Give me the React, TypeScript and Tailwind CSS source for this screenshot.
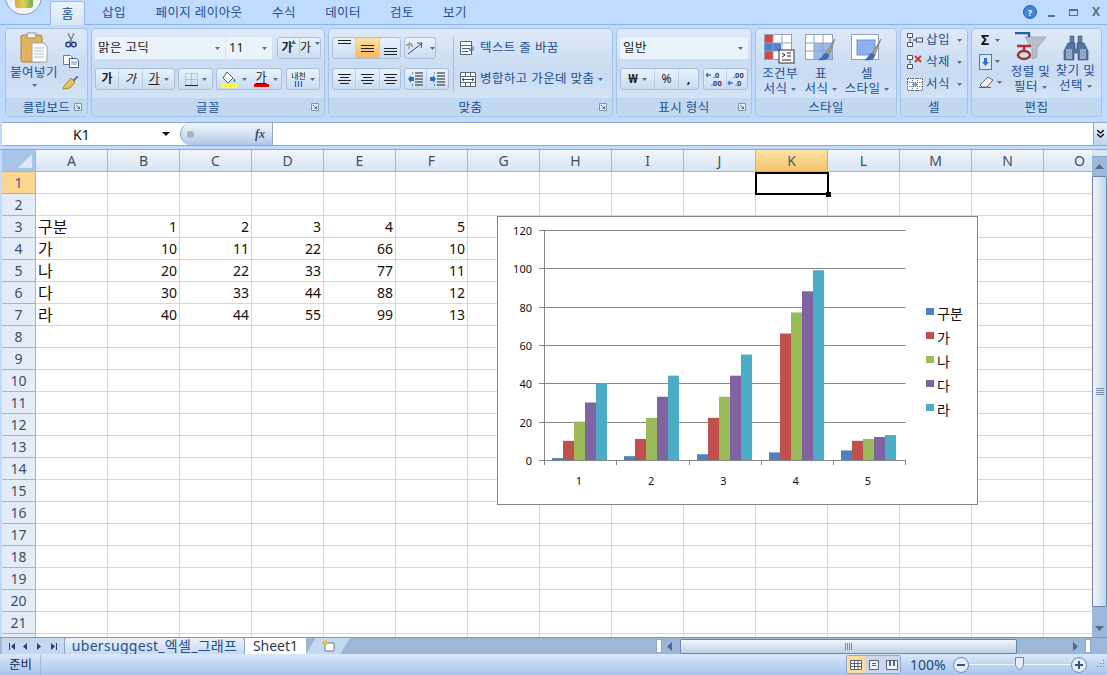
import type { ReactNode } from "react";

const KO = "font-['Noto_Sans','Noto_Sans_CJK_KR',sans-serif]";

const ribbonText = "text-[12.5px] leading-[16px] text-[#24508f] tracking-[0.4px]";

const Caret = ({ className = "" }: { className?: string }) => (
  <svg width="5" height="3" viewBox="0 0 5 3" className={`shrink-0 ${className}`}>
    <path d="M0 0h5L2.500 3z" fill="#56708f" />
  </svg>
);

const Launcher = () => (
  <svg width="8" height="8" viewBox="0 0 8 8" className="shrink-0">
    <path d="M.5.5h7v7h-7z" fill="#e4eefb" stroke="#7a94b5" />
    <path d="M2 2l3.500 3.500M3.500 5.500h2v-2" fill="none" stroke="#4d6d94" />
  </svg>
);

const Group = ({
  label,
  width,
  launcher,
  children,
}: {
  label: string;
  width: string;
  launcher?: boolean;
  children: ReactNode;
}) => (
  <div
    className={`${width} flex h-[89px] shrink-0 flex-col overflow-hidden rounded-[4px] border border-[#a9c3e2] bg-gradient-to-b from-[#dde9f8] via-[#c8dbf2] to-[#dceaf9]`}
  >
    <div className="h-[69px] shrink-0">{children}</div>
    <div className="relative flex h-[18px] items-center justify-center bg-[#c2d8f0] pt-[1px]">
      <span className={ribbonText}>{label}</span>
      {launcher && (
        <span className="absolute right-[5px] top-[5px] flex">
          <Launcher />
        </span>
      )}
    </div>
  </div>
);

const BtnGroup = ({ className = "", children }: { className?: string; children: ReactNode }) => (
  <div
    className={`flex h-[22px] items-stretch overflow-hidden rounded-[3px] border border-[#a9bfdb] bg-gradient-to-b from-[#e9f2fc] to-[#c9dcf2] ${className}`}
  >
    {children}
  </div>
);

const Btn = ({
  className = "",
  active,
  last,
  children,
}: {
  className?: string;
  active?: boolean;
  last?: boolean;
  children: ReactNode;
}) => (
  <div
    className={`flex items-center justify-center gap-[4px] ${last ? "" : "border-r border-[#bccfe6]"} ${
      active ? "bg-gradient-to-b from-[#fde3a4] to-[#fbb755]" : ""
    } ${className}`}
  >
    {children}
  </div>
);

const Combo = ({ value, className = "" }: { value: string; className?: string }) => (
  <div className={`flex h-[22px] items-center justify-between bg-[#eaf2fb] pl-[3px] pr-[5px] ${className}`}>
    <span className="text-[12.5px] tracking-[0.4px] text-[#222]">{value}</span>
    <Caret />
  </div>
);

const Lines = ({ rows }: { rows: number[] }) => (
  <span className="flex flex-col items-center gap-[2px]">
    {rows.map((w, i) => (
      <span key={i} className="h-px bg-[#222]" style={{ width: w }} />
    ))}
  </span>
);

const Letter = ({ className = "" }: { className?: string }) => (
  <span className={`text-[12px] leading-none text-[#222] ${className}`}>가</span>
);

const PasteIcon = () => (
  <svg width="28" height="32" viewBox="0 0 28 32">
    <rect x="1" y="3" width="21" height="27" rx="2" fill="#e2b25f" stroke="#b08236" />
    <rect x="7" y="1" width="9" height="5" rx="1" fill="#f3f0e4" stroke="#8d8d80" />
    <path d="M12 11h12l3 3v16H12z" fill="#fff" stroke="#99a3b3" />
    <path d="M14 16h10M14 19h10M14 22h10M14 25h10" stroke="#b3bcc9" />
  </svg>
);

const ScissorsIcon = () => (
  <svg width="12" height="15" viewBox="0 0 12 15">
    <path d="M3 0l4 9M9 0L5 9" stroke="#7d8794" strokeWidth="1.500" />
    <circle cx="3.200" cy="11.500" r="2.300" fill="none" stroke="#25427a" strokeWidth="1.500" />
    <circle cx="8.800" cy="11.500" r="2.300" fill="none" stroke="#25427a" strokeWidth="1.500" />
  </svg>
);

const CopyIcon = () => (
  <svg width="16" height="13" viewBox="0 0 16 13">
    <path d="M.5.500h7l2 2v7h-9z" fill="#fff" stroke="#5b7fae" />
    <path d="M6.500 3.500h7l2 2v7h-9z" fill="#fff" stroke="#355f96" />
    <path d="M8 7h6M8 9h6" stroke="#6f8db3" />
  </svg>
);

const BrushIcon = () => (
  <svg width="17" height="15" viewBox="0 0 17 15">
    <path d="M9 3l4 4-5 6-7 1 1-3z" fill="#e8c45c" stroke="#a98a33" />
    <path d="M11 5l4-4 1 1-4 4z" fill="#5b6fa8" stroke="#3d4f82" strokeWidth=".5" />
  </svg>
);

const BorderIcon = () => (
  <svg width="13" height="13" viewBox="0 0 13 13">
    <path d="M.5.500h12v12H.500zM6.500.500v12M.5 6.500h12" fill="none" stroke="#8f9cae" strokeDasharray="1 1" />
    <path d="M0 12.500h13" stroke="#222" />
  </svg>
);

const BucketIcon = () => (
  <svg width="17" height="17" viewBox="0 0 17 17">
    <path d="M6 1l6 6-5 5-5-5z" fill="#fff" stroke="#4d5a70" />
    <path d="M13 7c1 2 2 3 1 4s-2-1-1-4z" fill="#3d74b8" />
    <rect x="0" y="13" width="16" height="4" fill="#ffff33" />
  </svg>
);

const OrientIcon = () => (
  <svg width="24" height="16" viewBox="0 0 24 16">
    <path d="M3 14L16 4" stroke="#3c4a5c" />
    <path d="M12 3h5l-1 5" fill="none" stroke="#3c4a5c" />
    <text x="3" y="8" fontSize="7" fill="#222" transform="rotate(-38 6 8)">가</text>
  </svg>
);

const IndentIcon = ({ flip }: { flip?: boolean }) => (
  <svg width="16" height="15" viewBox="0 0 16 15">
    <path d="M7 1h8M7 4h8M7 7h8M7 10h8M7 13h8M4 1h1M4 13h1" stroke="#222" />
    <path d={flip ? "M0 5h3V3l3 4-3 4V9H0z" : "M6 5H3V3L0 7l3 4V9h3z"} fill="#2f6fc0" />
  </svg>
);

const WrapIcon = () => (
  <svg width="16" height="14" viewBox="0 0 16 14">
    <path d="M.5.500h11v13H.500z" fill="#f6f9fd" stroke="#5a6472" />
    <path d="M0 4.500h11M2 7.500h8M2 10.500h6" stroke="#5a6472" />
    <path d="M13 5v4h-3M11 7.500L9.500 9l1.500 1.500" fill="none" stroke="#3f6fa8" />
  </svg>
);

const MergeIcon = () => (
  <svg width="16" height="15" viewBox="0 0 16 15">
    <path d="M.5.500h15v14H.500z" fill="#fff" stroke="#56657a" />
    <path d="M0 4.500h16M0 10.500h16M5.500 0v4M10.500 0v4M5.500 11v4M10.500 11v4" stroke="#56657a" />
    <path d="M2 7.500h12M2 7.500l2-1.500M2 7.500l2 1.500M14 7.500l-2-1.500M14 7.500l-2 1.500" fill="none" stroke="#222" strokeWidth=".8" />
  </svg>
);

const DecimalIcon = ({ more }: { more?: boolean }) => (
  <svg width="20" height="16" viewBox="0 0 20 16">
    <text x={more ? 6 : 8} y="7" fontSize="7.500" fontWeight="700" fill="#33405a">{more ? ".00" : ".0"}</text>
    <text x={more ? 8 : 6} y="15" fontSize="7.500" fontWeight="700" fill="#33405a">{more ? ".0" : ".00"}</text>
    <path d={more ? "M1 12h5M1 12l2-2M1 12l2 2" : "M1 4h5M1 4l2-2M1 4l2 2"} stroke="#3b78c2" fill="none" strokeWidth="1.300" />
  </svg>
);

const TableGrid = ({ tint }: { tint: "cond" | "table" | "cell" }) => (
  <svg width="32" height="30" viewBox="0 0 32 30">
    <rect x=".5" y=".5" width="27" height="25" fill="#fff" stroke="#8ea3bf" />
    {tint === "cond" && (
      <>
        <rect x="1" y="1" width="8" height="8" fill="#d9453c" />
        <rect x="1" y="9" width="16" height="8" fill="#4f81d1" />
        <rect x="1" y="17" width="8" height="8" fill="#d9453c" />
      </>
    )}
    {tint === "table" && <rect x="9" y="9" width="18" height="16" fill="#9bb8ea" />}
    {tint === "cell" && <rect x="6" y="6" width="18" height="15" fill="#8fb0ee" stroke="#6e8fd0" />}
    {tint !== "cell" && (
      <path d="M9 0v26M18 0v26M0 9h28M0 17h28" stroke="#8ea3bf" />
    )}
    {tint === "cond" ? (
      <g>
        <rect x="15" y="16" width="15" height="13" fill="#fff" stroke="#333" />
        <path d="M18 19l3 2-3 2M27 19h-4M27 22h-4M18 26h9" fill="none" stroke="#222" />
      </g>
    ) : (
      <g>
        <path d="M30 5L21 19l3 2z" fill="#a9a27c" stroke="#6d6a55" strokeWidth=".5" />
        <path d="M21 19c-3 0-3 4-8 7 5 1 11 0 11-5z" fill="#3f6fb0" />
      </g>
    )}
  </svg>
);

const CellIcon = ({ kind }: { kind: "add" | "del" | "fmt" }) =>
  kind === "fmt" ? (
    <svg width="16" height="16" viewBox="0 0 16 16">
      <path d="M.5 2.500h15v12H.500z" fill="#fff" stroke="#4b5563" strokeDasharray="1.500 1" />
      <path d="M5.500 2v13M10.500 2v13M0 6.500h16M0 10.500h16" stroke="#6b7a90" strokeDasharray="1 1" />
      <rect x="6" y="7" width="4" height="3" fill="#7aa0d8" />
    </svg>
  ) : (
    <svg width="16" height="16" viewBox="0 0 16 16">
      <path d="M.5 1.500h5v4h-5zM.5 10.500h5v4h-5zM3 6.500v3" fill="#fff" stroke="#4b5563" />
      {kind === "add" ? (
        <>
          <path d="M6 8h3" stroke="#222" />
          <rect x="9.500" y="6" width="6" height="4" fill="#eaf2fb" stroke="#4b5563" />
        </>
      ) : (
        <path d="M8 2l6 6M14 2L8 8" stroke="#d8382b" strokeWidth="2" />
      )}
    </svg>
  );

const SortIcon = () => (
  <svg width="31" height="30" viewBox="0 0 31 30">
    <path d="M10 5h21l-9 11v9l-5 2V16z" fill="#b9c0c8" stroke="#7d8794" strokeWidth=".5" />
    <path d="M0 1h14v4" fill="none" stroke="#2c5a9f" strokeWidth="2.500" />
    <path d="M2 14h14" stroke="#a3372a" strokeWidth="2.500" />
    <ellipse cx="9" cy="23" rx="6" ry="4" fill="none" stroke="#a3372a" strokeWidth="2.500" />
    <path d="M9 14v5" stroke="#a3372a" strokeWidth="2.500" />
  </svg>
);

const BinocularsIcon = () => (
  <svg width="28" height="26" viewBox="0 0 28 26">
    <path d="M8 1h4v8H8zM16 1h4v8h-4z" fill="#5f7da6" stroke="#34496b" strokeWidth=".5" />
    <path d="M6 8h7v6h2V8h7l4 8v9H16v-7h-4v7H2v-9z" fill="#5474a0" stroke="#2f4668" strokeWidth=".6" />
    <path d="M4 14h6v10H4zM18 14h6v10h-6z" fill="#91a9c8" />
  </svg>
);

const StyleButton = ({
  tint,
  top,
  bottom,
  className,
}: {
  tint: "cond" | "table" | "cell";
  top: string;
  bottom: string;
  className: string;
}) => (
  <div className={`flex flex-col items-center pt-[5px] ${className}`}>
    <TableGrid tint={tint} />
    <span className={`${ribbonText} mt-[2px]`}>{top}</span>
    <span className={`${ribbonText} -mt-[1px] flex items-center gap-[4px] whitespace-nowrap`}>
      {bottom}
      <Caret />
    </span>
  </div>
);

const CellRow = ({ kind, label }: { kind: "add" | "del" | "fmt"; label: string }) => (
  <div className="flex h-[22px] items-center gap-[3px] pl-[6px]">
    <CellIcon kind={kind} />
    <span className={ribbonText}>{label}</span>
    <Caret className="ml-[4px]" />
  </div>
);

const Ribbon = () => (
  <div className="flex h-[94px] shrink-0 gap-[3px] bg-[#bfdbff] pl-[5px] pt-[3px]">
    <Group label="클립보드" width="w-[83px]" launcher>
      <div className="flex h-full">
        <div className="flex w-[56px] flex-col items-center pt-[3px]">
          <PasteIcon />
          <span className={`${ribbonText} mt-[1px]`}>붙여넣기</span>
          <Caret className="mt-[3px]" />
        </div>
        <div className="flex flex-col items-center gap-[7px] pt-[4px]">
          <ScissorsIcon />
          <CopyIcon />
          <BrushIcon />
        </div>
      </div>
    </Group>

    <Group label="글꼴" width="w-[234px]" launcher>
      <div className="flex flex-col gap-[9px] pl-[3px] pt-[8px]">
        <div className="flex items-center gap-px">
          <Combo value="맑은 고딕" className="w-[130px]" />
          <Combo value="11" className="w-[46px]" />
          <BtnGroup className="ml-[4px] w-[44px]">
            <Btn className="w-[23px] gap-0">
              <Letter className="font-bold" />
              <svg width="5" height="4" viewBox="0 0 5 4" className="-ml-[6px] -mt-[12px]"><path d="M0 4h5L2.500 0z" fill="#2f6fc0" /></svg>
            </Btn>
            <Btn className="w-[20px] gap-0" last>
              <Letter className="text-[10px]" />
              <svg width="5" height="3" viewBox="0 0 5 3" className="-mt-[10px]"><path d="M0 0h5L2.500 3z" fill="#2f6fc0" /></svg>
            </Btn>
          </BtnGroup>
        </div>
        <div className="flex gap-[3px]">
          <BtnGroup className="w-[80px]">
            <Btn className="w-[23px]"><Letter className="font-bold" /></Btn>
            <Btn className="w-[24px]"><Letter className="italic" /></Btn>
            <Btn className="flex-1" last><Letter className="underline" /><Caret /></Btn>
          </BtnGroup>
          <BtnGroup className="w-[35px]">
            <Btn className="flex-1" last><BorderIcon /><Caret /></Btn>
          </BtnGroup>
          <BtnGroup className="w-[66px]">
            <Btn className="w-[33px]" last><BucketIcon /><Caret /></Btn>
            <Btn className="flex-1" last>
              <span className="flex flex-col items-center">
                <Letter className="underline" />
                <span className="h-[3px] w-[15px] bg-[#e00000]" />
              </span>
              <Caret />
            </Btn>
          </BtnGroup>
          <BtnGroup className="ml-px w-[34px]">
            <Btn className="flex-1" last>
              <span className="flex flex-col items-center gap-px">
                <span className="text-[8px] leading-[9px] text-[#222]">내천</span>
                <svg width="9" height="6" viewBox="0 0 9 6"><path d="M1.500 0v6M4.500 0v6M7.500 0v6" stroke="#2f6fc0" strokeWidth="1.300" /></svg>
              </span>
              <Caret />
            </Btn>
          </BtnGroup>
        </div>
      </div>
    </Group>

    <Group label="맞춤" width="w-[285px]" launcher>
      <div className="flex h-full pl-[3px] pt-[8px]">
        <div className="flex w-[121px] flex-col gap-[9px]">
          <div className="flex gap-[3px]">
            <BtnGroup className="w-[69px]">
              <Btn className="w-[23px] items-start pt-[2px]"><Lines rows={[13, 13]} /></Btn>
              <Btn className="w-[24px]" active><Lines rows={[13, 13, 13]} /></Btn>
              <Btn className="flex-1 items-end pb-[3px]" last><Lines rows={[13, 13, 13]} /></Btn>
            </BtnGroup>
            <BtnGroup className="w-[32px]">
              <Btn className="flex-1 gap-0" last><OrientIcon /><Caret className="-ml-[3px]" /></Btn>
            </BtnGroup>
          </div>
          <div className="flex gap-[3px]">
            <BtnGroup className="w-[69px]">
              <Btn className="w-[23px]"><Lines rows={[13, 9, 13, 9]} /></Btn>
              <Btn className="w-[24px]"><Lines rows={[13, 9, 13, 9]} /></Btn>
              <Btn className="flex-1" last><Lines rows={[13, 9, 13, 9]} /></Btn>
            </BtnGroup>
            <BtnGroup className="w-[45px]">
              <Btn className="w-[22px]"><IndentIcon /></Btn>
              <Btn className="flex-1" last><IndentIcon flip /></Btn>
            </BtnGroup>
          </div>
        </div>
        <div className="h-[55px] w-px bg-[#a9bfdb]" />
        <div className="flex flex-col gap-[9px] pl-[6px]">
          <div className="flex h-[22px] items-center gap-[4px]">
            <WrapIcon />
            <span className={ribbonText}>텍스트 줄 바꿈</span>
          </div>
          <div className="flex h-[22px] items-center gap-[4px]">
            <MergeIcon />
            <span className={ribbonText}>병합하고 가운데 맞춤</span>
            <Caret />
          </div>
        </div>
      </div>
    </Group>

    <Group label="표시 형식" width="w-[136px]" launcher>
      <div className="flex flex-col gap-[9px] pl-[3px] pt-[8px]">
        <Combo value="일반" className="w-[128px]" />
        <div className="flex gap-[4px]">
          <BtnGroup className="w-[79px]">
            <Btn className="w-[34px]" >
              <span className="text-[13px] font-bold text-[#222]">₩</span>
              <Caret />
            </Btn>
            <Btn className="w-[24px]"><span className="text-[12px] text-[#222]">%</span></Btn>
            <Btn className="flex-1" last><span className="text-[13px] font-bold text-[#222]">,</span></Btn>
          </BtnGroup>
          <BtnGroup className="w-[45px]">
            <Btn className="w-[23px]"><DecimalIcon /></Btn>
            <Btn className="flex-1" last><DecimalIcon more /></Btn>
          </BtnGroup>
        </div>
      </div>
    </Group>

    <Group label="스타일" width="w-[142px]">
      <div className="flex">
        <StyleButton tint="cond" top="조건부" bottom="서식" className="w-[48px]" />
        <StyleButton tint="table" top="표" bottom="서식" className="w-[34px]" />
        <StyleButton tint="cell" top="셀" bottom="스타일" className="w-[58px]" />
      </div>
    </Group>

    <Group label="셀" width="w-[68px]">
      <div className="flex flex-col">
        <CellRow kind="add" label="삽입" />
        <CellRow kind="del" label="삭제" />
        <CellRow kind="fmt" label="서식" />
      </div>
    </Group>

    <Group label="편집" width="w-[131px]">
      <div className="flex">
        <div className="flex w-[36px] flex-col items-start gap-[5px] pl-[7px] pt-[3px]">
          <div className="flex h-[16px] items-center gap-[6px] pl-[2px]">
            <span className="text-[14px] font-bold leading-none text-[#111]">Σ</span>
            <Caret />
          </div>
          <div className="flex h-[17px] items-center gap-[3px]">
            <svg width="13" height="16" viewBox="0 0 13 16">
              <rect x=".5" y=".5" width="12" height="15" fill="#dbe8f8" stroke="#5478ad" />
              <path d="M5 4h3v4h2l-3.500 4L3 8h2z" fill="#2f6fc0" />
            </svg>
            <Caret />
          </div>
          <div className="flex h-[14px] items-center gap-[3px]">
            <svg width="15" height="12" viewBox="0 0 15 12">
              <path d="M9 1l5 3-6 7H3L1 9z" fill="#f4f6f8" stroke="#5c6673" />
              <path d="M0 11.500h12" stroke="#5c6673" />
            </svg>
            <Caret />
          </div>
        </div>
        <div className="flex w-[45px] flex-col items-center pt-[3px]">
          <SortIcon />
          <span className={`${ribbonText} mt-[2px] whitespace-nowrap`}>정렬 및</span>
          <span className={`${ribbonText} -mt-[1px] flex items-center gap-[4px]`}>필터<Caret /></span>
        </div>
        <div className="flex w-[45px] flex-col items-center pt-[6px]">
          <BinocularsIcon />
          <span className={`${ribbonText} mt-[2px] whitespace-nowrap`}>찾기 및</span>
          <span className={`${ribbonText} -mt-[1px] flex items-center gap-[4px]`}>선택<Caret /></span>
        </div>
      </div>
    </Group>
  </div>
);

const TabBar = () => {
  const tabs = [
    ["삽입", "w-[58px]"],
    ["페이지 레이아웃", "w-[112px]"],
    ["수식", "w-[58px]"],
    ["데이터", "w-[60px]"],
    ["검토", "w-[58px]"],
    ["보기", "w-[48px]"],
  ];
  return (
    <div className="relative flex h-[25px] shrink-0 items-end border-b border-[#8db2e3] bg-[#bfdbff] pl-[50px]">
      <div className="absolute -top-[22px] left-[5px] h-[37px] w-[37px] rounded-full border border-[#8a98aa] bg-gradient-to-b from-[#dfe5ec] to-[#f5f7fa]">
        <div className="absolute left-[9px] top-[21px] h-[8px] w-[18px] rounded-b-[3px] bg-gradient-to-r from-[#e0a93a] via-[#d9d35c] to-[#6aa84f]" />
      </div>
      <div className="-mb-px flex h-[24px] w-[35px] items-center justify-center rounded-t-[3px] border border-b-0 border-[#9ebbdd] bg-gradient-to-b from-[#eaf3fd] to-[#d6e5f6]">
        <span className="text-[13px] text-[#24508f]">홈</span>
      </div>
      {tabs.map(([name, w]) => (
        <div key={name} className={`flex h-[24px] items-center justify-center pt-[1px] ${w}`}>
          <span className={`${ribbonText} whitespace-nowrap`}>{name}</span>
        </div>
      ))}
      <div className="absolute right-[7px] top-[5px] flex items-center">
        <span className="flex h-[14px] w-[14px] items-center justify-center rounded-full border border-[#1f5fb0] bg-[#3f86d6] text-[9px] font-bold leading-none text-white">
          ?
        </span>
        <span className="ml-[11px] mt-[8px] h-[2px] w-[7px] bg-[#5b6f8a]" />
        <span className="ml-[14px] h-[7px] w-[9px] border border-t-2 border-[#5b6f8a]" />
        <span className="ml-[14px] text-[12px] font-bold leading-none text-[#5b6f8a]">X</span>
      </div>
    </div>
  );
};

const FormulaBar = () => (
  <div className="flex h-[30px] shrink-0 flex-col bg-[#bfdbff] pl-[2px] pt-[3px]">
    <div className="flex h-[24px] shrink-0 items-stretch border-y border-[#8ea9c9] bg-white">
      <div className="flex w-[178px] items-center">
        <span className="ml-[71px] text-[14px] text-[#111]">K1</span>
        <svg width="8" height="4" viewBox="0 0 8 4" className="ml-[72px]"><path d="M0 0h8L4 4z" fill="#111" /></svg>
      </div>
      <div className="flex w-[93px] items-center justify-between rounded-l-[12px] border-r border-l border-[#8ea9c9] bg-gradient-to-b from-[#f0f5fb] via-[#d3e1f2] to-[#aec7e6] pl-[6px] pr-[7px]">
        <span className="h-[7px] w-[7px] rounded-full bg-[#a8b2bf]" />
        <span className="font-['Liberation_Serif',serif] text-[12px] font-bold italic text-[#3a4a5e]">fx</span>
      </div>
      <div className="flex-1" />
      <div className="flex w-[14px] items-center justify-center border-l border-[#8ea9c9] bg-gradient-to-b from-[#eaf2fb] to-[#bdd3ee]">
        <svg width="7" height="8" viewBox="0 0 7 8"><path d="M0 0l3.500 3L7 0M0 4l3.500 3L7 4" fill="none" stroke="#111" strokeWidth="1.400" /></svg>
      </div>
    </div>
  </div>
);

const columns = ["A", "B", "C", "D", "E", "F", "G", "H", "I", "J", "K", "L", "M", "N", "O"];

const sheet: Record<number, (string | number)[]> = {
  3: ["구분", 1, 2, 3, 4, 5],
  4: ["가", 10, 11, 22, 66, 10],
  5: ["나", 20, 22, 33, 77, 11],
  6: ["다", 30, 33, 44, 88, 12],
  7: ["라", 40, 44, 55, 99, 13],
};

const rows = Array.from({ length: 22 }, (_, i) => i + 1);

const series = [
  { name: "구분", color: "#4f81bd", values: [1, 2, 3, 4, 5] },
  { name: "가", color: "#c0504d", values: [10, 11, 22, 66, 10] },
  { name: "나", color: "#9bbb59", values: [20, 22, 33, 77, 11] },
  { name: "다", color: "#8064a2", values: [30, 33, 44, 88, 12] },
  { name: "라", color: "#4bacc6", values: [40, 44, 55, 99, 13] },
];

const Chart = () => {
  const y0 = 460;
  const scale = 230 / 120;
  const step = 72.25;
  return (
    <div className="absolute left-[495px] top-[66px] h-[289px] w-[481px] border border-[#868686] bg-white">
      <svg width="479" height="287" viewBox="498 217 479 287" className="block font-['Noto_Sans','Noto_Sans_CJK_KR',sans-serif]">
        {[0, 20, 40, 60, 80, 100, 120].map((v) => {
          const y = Math.round(y0 - v * scale) + 0.5;
          return (
            <g key={v}>
              <path d={`M539 ${y}H905.500`} stroke="#868686" />
              <text x="532" y={y + 4} textAnchor="end" fontSize="11" fill="#111">{v}</text>
            </g>
          );
        })}
        <path d="M544.500 230V460" stroke="#868686" />
        {[0, 1, 2, 3, 4, 5].map((i) => (
          <path key={i} d={`M${Math.round(544 + i * step) + 0.5} 460v5`} stroke="#868686" />
        ))}
        {series.map((s, si) =>
          s.values.map((v, c) => (
            <rect
              key={c}
              x={Math.round(552 + c * step) + si * 11}
              y={y0 - v * scale}
              width="11"
              height={v * scale}
              fill={s.color}
            />
          )),
        )}
        {[1, 2, 3, 4, 5].map((n, i) => (
          <text key={n} x={579 + i * step} y="485" textAnchor="middle" fontSize="11" fill="#111">{n}</text>
        ))}
        {series.map((s, i) => (
          <g key={s.name}>
            <rect x="926" y={308 + i * 24} width="8" height="7" fill={s.color} />
            <text x="937" y={319 + i * 24} fontSize="14" fill="#111">{s.name}</text>
          </g>
        ))}
      </svg>
    </div>
  );
};

const SheetGrid = () => (
  <div className="relative min-w-0 flex-1 overflow-hidden bg-white">
    <div className="grid grid-cols-[34px_repeat(15,72px)] grid-rows-[22px_repeat(22,22px)]">
      <div className="relative border-r border-b border-[#9eb6ce] bg-[#a9c4e9]">
        <span className="absolute bottom-[3px] right-[3px] h-0 w-0 border-b-[14px] border-l-[14px] border-b-[#dce8f6] border-l-transparent" />
      </div>
      {columns.map((c) => (
        <div
          key={c}
          className={`flex items-center justify-center border-r border-b text-[14px] ${
            c === "K"
              ? "border-[#f2a33a] bg-gradient-to-b from-[#fbe3a6] to-[#f6c26a] text-[#4a5a70]"
              : "border-[#9eb6ce] bg-gradient-to-b from-[#f2f6fb] to-[#d7e4f2] text-[#3d5068]"
          }`}
        >
          {c}
        </div>
      ))}
      {rows.map((r) => (
        <div key={r} className="contents">
          <div
            className={`flex items-center justify-center border-r border-b text-[14px] ${
              r === 1
                ? "border-[#f2a33a] bg-[#fbd68e] text-[#4a5a70]"
                : "border-[#9eb6ce] bg-[#e4ecf7] text-[#3d5068]"
            }`}
          >
            {r < 22 ? r : null}
          </div>
          {columns.map((c, ci) => {
            const v = sheet[r]?.[ci];
            return (
              <div
                key={c}
                className={`flex items-end overflow-hidden border-r border-b border-[#d0d7e5] pb-[1px] leading-[18px] text-[#111] ${
                  typeof v === "number" ? "justify-end pr-[2px] text-[14px]" : "pl-[2px] text-[16px]"
                }`}
              >
                {v}
              </div>
            );
          })}
        </div>
      ))}
    </div>
    <Chart />
    <div className="absolute left-[753px] top-[22px] h-[23px] w-[74px] border-2 border-black">
      <span className="absolute -bottom-[4px] -right-[4px] h-[5px] w-[5px] bg-black" />
    </div>
  </div>
);

const VScrollbar = () => (
  <div className="flex w-[15px] shrink-0 flex-col bg-[#9db7d9]">
    <div className="h-[7px] border-b border-[#8ea9c9] bg-[#dbe7f6]" />
    <div className="flex h-[19px] items-center justify-center">
      <svg width="9" height="5" viewBox="0 0 9 5"><path d="M0 5h9L4.500 0z" fill="#4f6b90" /></svg>
    </div>
    <div className="flex h-[431px] items-center justify-center rounded-[2px] border-x border-y border-[#6b86ad] bg-gradient-to-r from-[#f2f6fb] to-[#c5d5e9]">
      <span className="flex flex-col gap-px">
        <span className="h-px w-[8px] bg-[#7a8ea8]" />
        <span className="h-px w-[8px] bg-[#7a8ea8]" />
        <span className="h-px w-[8px] bg-[#7a8ea8]" />
        <span className="h-px w-[8px] bg-[#7a8ea8]" />
      </span>
    </div>
    <div className="flex flex-1 items-end justify-center pb-[6px]">
      <svg width="9" height="5" viewBox="0 0 9 5"><path d="M0 0h9L4.500 5z" fill="#4f6b90" /></svg>
    </div>
  </div>
);

const SheetTabs = () => (
  <div className="flex h-[17px] shrink-0 items-stretch border-t border-[#7e99bd] bg-[#9db7d9] pl-[2px]">
    <div className="flex w-[62px] items-center justify-between bg-[#c3d8f1] px-[6px]">
      {["M7 0v7L3 3.500zM1 0h1v7H1z", "M5 0v7L1 3.500z", "M1 0v7l4-3.500z", "M1 0v7l4-3.500zM6 0h1v7H6z"].map((d) => (
        <svg key={d} width="8" height="7" viewBox="0 0 8 7"><path d={d} fill="#24416f" /></svg>
      ))}
    </div>
    <div className="flex w-[181px] items-center justify-center rounded-t-[3px] border-x border-[#8ea9c9] bg-gradient-to-b from-[#e9f1fb] to-[#c6d9f0] text-[14px] leading-none tracking-[0.3px] whitespace-nowrap text-[#24508f]">
      ubersuggest_엑셀_그래프
    </div>
    <div className="flex w-[61px] items-center justify-center bg-white text-[14px] leading-none text-[#2a3b52]">
      Sheet1
    </div>
    <div className="flex w-[44px] items-center justify-center bg-[#c3d8f1] [clip-path:polygon(22%_0,100%_0,78%_100%,0_100%)]">
      <svg width="13" height="12" viewBox="0 0 13 12">
        <path d="M3 3h9v8H3z" fill="#fff" stroke="#6b7a90" />
        <circle cx="3" cy="3" r="2.500" fill="#f0b83c" />
      </svg>
    </div>
    <div className="flex-1" />
    <div className="flex items-center">
      <span className="h-[14px] w-[6px] border border-[#8ea9c9] bg-white" />
      <svg width="5" height="9" viewBox="0 0 5 9" className="ml-[5px]"><path d="M5 0v9L0 4.500z" fill="#4f6b90" /></svg>
      <div className="ml-[8px] flex h-[15px] w-[337px] items-center justify-center rounded-[2px] border border-[#6b86ad] bg-gradient-to-b from-[#f2f6fb] to-[#bfcfe3]">
        <span className="flex gap-px">
          <span className="h-[7px] w-px bg-[#7a8ea8]" />
          <span className="h-[7px] w-px bg-[#7a8ea8]" />
          <span className="h-[7px] w-px bg-[#7a8ea8]" />
          <span className="h-[7px] w-px bg-[#7a8ea8]" />
        </span>
      </div>
      <svg width="5" height="9" viewBox="0 0 5 9" className="ml-[56px]"><path d="M0 0v9l5-4.500z" fill="#4f6b90" /></svg>
      <span className="ml-[7px] mr-[16px] h-[14px] w-[6px] border border-[#8ea9c9] bg-white" />
    </div>
  </div>
);

const StatusBar = () => (
  <div className="flex h-[21px] shrink-0 items-center bg-gradient-to-b from-[#dbe8f9] via-[#bfd5f1] to-[#a9c5eb]">
    <span className="w-[41px] border-r border-[#9fb9da] pl-[9px] text-[12.5px] leading-[20px] text-[#15294a]">준비</span>
    <div className="flex-1" />
    <div className="flex h-[19px] w-[55px] items-stretch overflow-hidden rounded-[2px] border border-[#8ea9c9]">
      <span className="flex w-[18px] items-center justify-center bg-[#fbdc9c]">
        <svg width="12" height="10" viewBox="0 0 12 10"><path d="M.5.500h11v9H.500zM.5 3.500h11M.5 6.500h11M4.500 0v10M8 0v10" fill="#fff" stroke="#56657a" /></svg>
      </span>
      <span className="flex w-[18px] items-center justify-center bg-[#c9d8ec]">
        <svg width="10" height="10" viewBox="0 0 10 10"><path d="M.5.500h9v9h-9z" fill="#eef2f7" stroke="#56657a" /><path d="M3 3.500h4M3 5.500h4" stroke="#56657a" /></svg>
      </span>
      <span className="flex flex-1 items-center justify-center bg-[#c9d8ec]">
        <svg width="12" height="10" viewBox="0 0 12 10"><path d="M.5.500h11v9H.500z" fill="#eef2f7" stroke="#56657a" /><path d="M3 1h2v5H3zM7 1h2v5H7z" fill="#56657a" /></svg>
      </span>
    </div>
    <span className="ml-[9px] w-[36px] text-[14px] leading-none text-[#25477a]">100%</span>
    <span className="ml-[7px] flex h-[16px] w-[16px] items-center justify-center rounded-full border border-[#6f8bb0] bg-[#e3ecf8]">
      <span className="h-[2px] w-[8px] bg-[#3c5373]" />
    </span>
    <div className="relative h-px w-[102px] bg-[#eef4fb]">
      <svg width="9" height="14" viewBox="0 0 9 14" className="absolute -top-[7px] left-[46px]">
        <path d="M.5.500h8v8L4.500 13 .5 8.500z" fill="#e9eff7" stroke="#6f8bb0" />
      </svg>
    </div>
    <span className="relative flex h-[16px] w-[16px] items-center justify-center rounded-full border border-[#6f8bb0] bg-[#e3ecf8]">
      <span className="h-[2px] w-[8px] bg-[#3c5373]" />
      <span className="absolute h-[8px] w-[2px] bg-[#3c5373]" />
    </span>
    <svg width="11" height="11" viewBox="0 0 11 11" className="ml-[7px] mr-[2px]">
      <path d="M9 1h1v1H9zM6 4h1v1H6zM9 4h1v1H9zM3 7h1v1H3zM6 7h1v1H6zM9 7h1v1H9z" fill="#5b7699" />
    </svg>
  </div>
);

export default function App() {
  return (
    <div className={`flex h-[675px] w-[1107px] flex-col overflow-hidden bg-[#bfdbff] ${KO}`}>
      <TabBar />
      <Ribbon />
      <FormulaBar />
      <div className="flex min-h-0 flex-1 border-t border-[#8ea9c9] pl-[2px]">
        <SheetGrid />
        <VScrollbar />
      </div>
      <SheetTabs />
      <StatusBar />
    </div>
  );
}
